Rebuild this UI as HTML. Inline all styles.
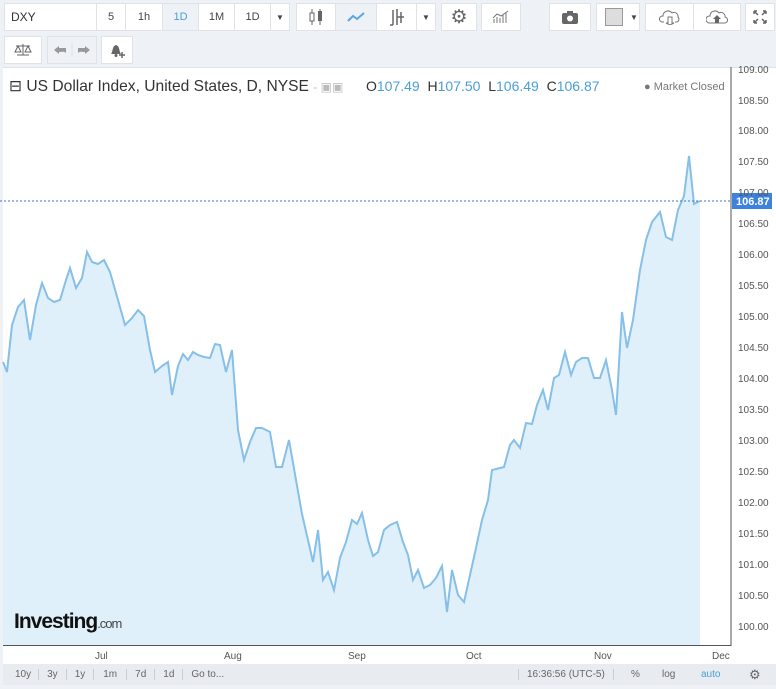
<!DOCTYPE html><html><head><style>
body{margin:0;width:776px;height:689px;background:#eef1f5;font-family:"Liberation Sans",sans-serif;position:relative;overflow:hidden}
.b{position:absolute;background:#fff;border:1px solid #dfe2e6;box-sizing:border-box;font-size:11px;color:#444;display:flex;align-items:center;justify-content:center}
.t{position:absolute;font-size:10px;color:#555}
</style></head><body>
<div class="b" style="left:4px;top:3px;width:93px;height:28px;justify-content:flex-start;padding-left:6px;font-size:12px;color:#333">DXY</div>
<div class="b" style="left:96px;top:3px;width:30px;height:28px">5</div>
<div class="b" style="left:125px;top:3px;width:38px;height:28px">1h</div>
<div class="b" style="left:162px;top:3px;width:37px;height:28px;background:#eef1f5;color:#4a9fd8">1D</div>
<div class="b" style="left:198px;top:3px;width:37px;height:28px">1M</div>
<div class="b" style="left:234px;top:3px;width:37px;height:28px">1D</div>
<div class="b" style="left:270px;top:3px;width:20px;height:28px;font-size:8px">▼</div>
<div class="b" style="left:296px;top:3px;width:40px;height:28px"><svg width="16" height="18"><line x1="4" y1="1" x2="4" y2="17" stroke="#666"/><rect x="2" y="5" width="4" height="8" fill="#fff" stroke="#666"/><line x1="12" y1="1" x2="12" y2="17" stroke="#666"/><rect x="10" y="3" width="4" height="10" fill="#666"/></svg></div>
<div class="b" style="left:335px;top:3px;width:42px;height:28px;background:#eef1f5"><svg width="18" height="12"><polyline points="1,10 6,5 10,8 17,2" fill="none" stroke="#5aa7e0" stroke-width="2"/></svg></div>
<div class="b" style="left:376px;top:3px;width:41px;height:28px"><svg width="18" height="18"><path d="M5 2V17M2 17H5M9 1V17M9 9H16M13 4V15" stroke="#666" stroke-width="1.5" fill="none"/></svg></div>
<div class="b" style="left:416px;top:3px;width:20px;height:28px;font-size:8px">▼</div>
<div class="b" style="left:441px;top:3px;width:36px;height:28px;font-size:19px;color:#666">⚙</div>
<div class="b" style="left:481px;top:3px;width:40px;height:28px"><svg width="18" height="14"><path d="M2 13V9M5 13V7M8 13V8M11 13V5M14 13V3M1 8L5 4 9 6 16 1" stroke="#777" fill="none"/></svg></div>
<div class="b" style="left:549px;top:3px;width:42px;height:28px"><svg width="18" height="14"><rect x="1" y="3" width="16" height="11" rx="2" fill="#666"/><rect x="6" y="1" width="6" height="3" fill="#666"/><circle cx="9" cy="8.5" r="3" fill="#fff"/></svg></div>
<div class="b" style="left:596px;top:3px;width:44px;height:28px;justify-content:flex-start;padding-left:8px;font-size:8px"><span style="width:16px;height:16px;background:#ddd;border:1px solid #999;display:inline-block;margin-right:7px"></span>▼</div>
<div class="b" style="left:645px;top:3px;width:49px;height:28px"><svg width="22" height="16"><path d="M5 13H3A3 3 0 0 1 4 7 5 5 0 0 1 13 4 4 4 0 0 1 19 8 3 3 0 0 1 18 13H16" fill="none" stroke="#777"/><path d="M9 8V14H7L11 16 15 14H13V8Z" fill="#fff" stroke="#777"/></svg></div>
<div class="b" style="left:693px;top:3px;width:48px;height:28px"><svg width="22" height="16"><path d="M3 14A3 3 0 0 1 4 7 5 5 0 0 1 13 4 4 4 0 0 1 19 8 3 3 0 0 1 18 14Z" fill="none" stroke="#777"/><path d="M11 6L15 10H13V14H9V10H7Z" fill="#666"/></svg></div>
<div class="b" style="left:745px;top:3px;width:30px;height:28px"><svg width="16" height="16"><path d="M2 2L6 6M2 2H5M2 2V5M14 2L10 6M14 2H11M14 2V5M2 14L6 10M2 14H5M2 14V11M14 14L10 10M14 14H11M14 14V11" stroke="#666" stroke-width="1.5"/></svg></div>
<div class="b" style="left:4px;top:36px;width:38px;height:28px"><svg width="18" height="14"><path d="M9 1V12M3 12H15M2 3H16M4 3L1 9H7ZM14 3L11 9H17Z" stroke="#666" fill="none"/></svg></div>
<div class="b" style="left:47px;top:36px;width:50px;height:28px;background:#eef1f5"><svg width="40" height="14"><path d="M2 7L7 3V5H14V10C12 8 10 9 7 9V11Z" fill="#999"/><path d="M38 7L33 3V5H26V10C28 8 30 9 33 9V11Z" fill="#999"/><line x1="20" y1="0" x2="20" y2="14" stroke="#dfe2e6"/></svg></div>
<div class="b" style="left:101px;top:36px;width:32px;height:28px"><svg width="18" height="16"><path d="M3 12C5 10 4 4 8 3 12 4 11 10 13 12Z" fill="#666"/><circle cx="8" cy="13.5" r="1.5" fill="#666"/><path d="M14 10V16M11 13H17" stroke="#666" stroke-width="1.5"/></svg></div>
<div style="position:absolute;left:3px;top:67px;width:773px;height:597px;background:#fff;border-top:1px solid #dfe2e6"></div>
<svg style="position:absolute;left:0;top:0" width="776" height="689">
<polygon fill="#dff0fa" points="3,645 3,362 7,372 12,325 18,307 24,300 30,340 36,305 42,283 48,298 54,302 60,300 66,280 70,268 76,288 82,278 87,252 92,262 98,264 104,260 110,272 118,300 125,325 132,318 138,310 144,316 150,350 155,372 162,366 168,362 172,395 178,366 183,354 188,360 193,352 198,355 204,357 210,358 215,344 220,345 226,372 232,350 238,430 244,460 250,442 256,428 262,428 270,432 276,467 282,467 289,440 296,480 302,514 308,540 313,562 318,530 323,580 328,572 334,590 340,558 346,542 352,520 357,524 362,513 368,540 373,556 378,552 384,530 390,525 397,522 403,542 408,555 413,580 418,570 424,588 430,585 436,578 442,566 447,612 452,570 458,595 464,602 470,575 476,548 482,520 488,500 492,470 500,468 504,467 510,445 514,440 520,448 526,423 532,424 537,405 543,390 548,410 554,378 559,375 565,352 571,375 576,362 582,358 588,358 594,378 600,378 606,360 612,390 616,415 622,312 627,348 633,320 640,270 646,240 652,222 660,212 666,237 672,240 678,210 684,196 689,156 694,204 700,201 700,645"/>
<polyline fill="none" stroke="#86bfe8" stroke-width="2" points="3,362 7,372 12,325 18,307 24,300 30,340 36,305 42,283 48,298 54,302 60,300 66,280 70,268 76,288 82,278 87,252 92,262 98,264 104,260 110,272 118,300 125,325 132,318 138,310 144,316 150,350 155,372 162,366 168,362 172,395 178,366 183,354 188,360 193,352 198,355 204,357 210,358 215,344 220,345 226,372 232,350 238,430 244,460 250,442 256,428 262,428 270,432 276,467 282,467 289,440 296,480 302,514 308,540 313,562 318,530 323,580 328,572 334,590 340,558 346,542 352,520 357,524 362,513 368,540 373,556 378,552 384,530 390,525 397,522 403,542 408,555 413,580 418,570 424,588 430,585 436,578 442,566 447,612 452,570 458,595 464,602 470,575 476,548 482,520 488,500 492,470 500,468 504,467 510,445 514,440 520,448 526,423 532,424 537,405 543,390 548,410 554,378 559,375 565,352 571,375 576,362 582,358 588,358 594,378 600,378 606,360 612,390 616,415 622,312 627,348 633,320 640,270 646,240 652,222 660,212 666,237 672,240 678,210 684,196 689,156 694,204 700,201"/>
<line x1="0" y1="201" x2="731" y2="201" stroke="#3a78c8" stroke-dasharray="2,2"/>
<line x1="731" y1="67" x2="731" y2="646" stroke="#555"/>
<line x1="3" y1="645.5" x2="731" y2="645.5" stroke="#555"/>
<rect x="732" y="193" width="40" height="16" fill="#3d82dd"/>
<text x="736" y="205" font-size="11" font-weight="bold" fill="#fff" font-family="Liberation Sans">106.87</text>
</svg>
<div class="t" style="left:738px;top:65px">109.00</div><div class="t" style="left:738px;top:96px">108.50</div><div class="t" style="left:738px;top:126px">108.00</div><div class="t" style="left:738px;top:157px">107.50</div><div class="t" style="left:738px;top:188px">107.00</div><div class="t" style="left:738px;top:219px">106.50</div><div class="t" style="left:738px;top:250px">106.00</div><div class="t" style="left:738px;top:281px">105.50</div><div class="t" style="left:738px;top:312px">105.00</div><div class="t" style="left:738px;top:343px">104.50</div><div class="t" style="left:738px;top:374px">104.00</div><div class="t" style="left:738px;top:405px">103.50</div><div class="t" style="left:738px;top:436px">103.00</div><div class="t" style="left:738px;top:467px">102.50</div><div class="t" style="left:738px;top:498px">102.00</div><div class="t" style="left:738px;top:529px">101.50</div><div class="t" style="left:738px;top:560px">101.00</div><div class="t" style="left:738px;top:591px">100.50</div><div class="t" style="left:738px;top:622px">100.00</div>
<div style="position:absolute;left:9px;top:77px;font-size:15.6px;color:#333;white-space:nowrap">⊟ US Dollar Index, United States, D, NYSE <span style="color:#bbb;font-size:12px">- ▣▣</span></div>
<div style="position:absolute;left:366px;top:78px;font-size:14px;color:#333;white-space:nowrap">O<span style="color:#4a9fd8">107.49</span>&nbsp; H<span style="color:#4a9fd8">107.50</span>&nbsp; L<span style="color:#4a9fd8">106.49</span>&nbsp; C<span style="color:#4a9fd8">106.87</span></div>
<div style="position:absolute;left:644px;top:81px;font-size:11px;color:#777">● Market Closed</div>
<div style="position:absolute;left:14px;top:610px;font-size:21px;font-weight:bold;color:#111;letter-spacing:-1px">Investing<span style="font-size:13px;font-weight:normal;color:#444">.com</span></div>
<div class="t" style="left:95px;top:651px">Jul</div><div class="t" style="left:224px;top:651px">Aug</div><div class="t" style="left:348px;top:651px">Sep</div><div class="t" style="left:466px;top:651px">Oct</div><div class="t" style="left:594px;top:651px">Nov</div><div class="t" style="left:712px;top:651px">Dec</div>
<div style="position:absolute;left:3px;top:664px;width:773px;height:21px;background:#e8ebef;font-size:10px;color:#666;display:flex;align-items:center">
<span style="padding:0 7px 0 12px;border-right:1px solid #ccc">10y</span><span style="padding:0 8px;border-right:1px solid #ccc">3y</span><span style="padding:0 8px;border-right:1px solid #ccc">1y</span><span style="padding:0 9px;border-right:1px solid #ccc">1m</span><span style="padding:0 8px;border-right:1px solid #ccc">7d</span><span style="padding:0 8px;border-right:1px solid #ccc">1d</span><span style="padding:0 8px">Go to...</span>
<span style="position:absolute;left:515px;border-left:1px solid #ccc;border-right:1px solid #ccc;padding:0 8px">16:36:56 (UTC-5)</span><span style="position:absolute;left:628px">%</span><span style="position:absolute;left:659px">log</span><span style="position:absolute;left:698px;color:#4a9fd8">auto</span><span style="position:absolute;left:746px;font-size:13px">⚙</span></div>
</body></html>
